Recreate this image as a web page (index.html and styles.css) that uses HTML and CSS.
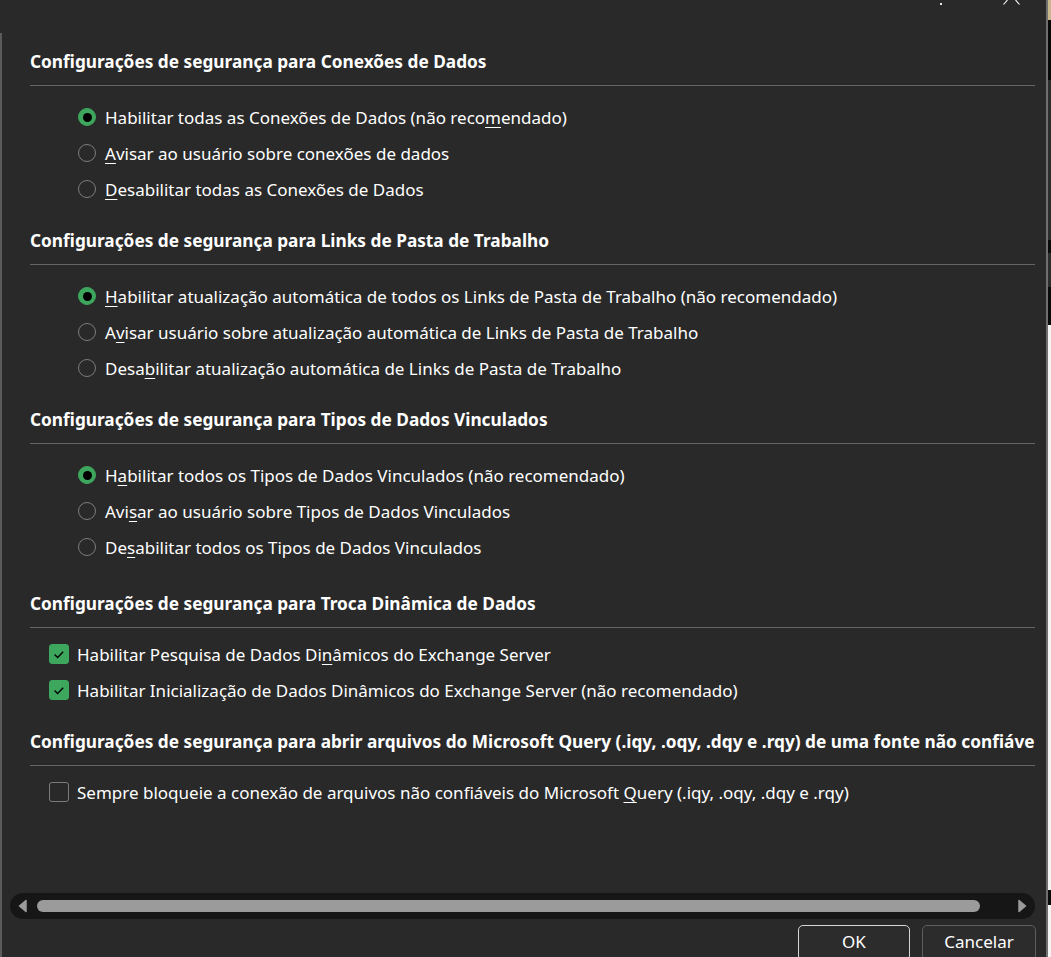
FILE: index.html
```html
<!DOCTYPE html>
<html lang="pt-BR">
<head>
<meta charset="utf-8">
<title>Central de Confiabilidade - Conteúdo Externo</title>
<link rel="stylesheet" href="styles.css">
</head>
<body>
<div class="screen">
  <div class="dialog">
    <div class="titlebar">
      <span class="help-dot"></span>
      <svg class="close-x" width="17" height="6" viewBox="0 0 17 6"><path d="M4.5 0 L0.5 4.5 M12.5 0 L16.5 4.5" stroke="#ffffff" stroke-width="1.1" fill="none"/></svg>
    </div>
    <div class="panel">
      <div class="content">
        <section class="group">
          <h2 class="group-title">Configurações de segurança para Conexões de Dados</h2>
          <div class="options radios">
            <label class="opt"><span class="radio checked"></span><span>Habilitar todas as Conexões de Dados (não reco<u>m</u>endado)</span></label>
            <label class="opt"><span class="radio"></span><span><u>A</u>visar ao usuário sobre conexões de dados</span></label>
            <label class="opt"><span class="radio"></span><span><u>D</u>esabilitar todas as Conexões de Dados</span></label>
          </div>
        </section>
        <section class="group">
          <h2 class="group-title">Configurações de segurança para Links de Pasta de Trabalho</h2>
          <div class="options radios">
            <label class="opt"><span class="radio checked"></span><span><u>H</u>abilitar atualização automática de todos os Links de Pasta de Trabalho (não recomendado)</span></label>
            <label class="opt"><span class="radio"></span><span>A<u>v</u>isar usuário sobre atualização automática de Links de Pasta de Trabalho</span></label>
            <label class="opt"><span class="radio"></span><span>Desa<u>b</u>ilitar atualização automática de Links de Pasta de Trabalho</span></label>
          </div>
        </section>
        <section class="group">
          <h2 class="group-title">Configurações de segurança para Tipos de Dados Vinculados</h2>
          <div class="options radios">
            <label class="opt"><span class="radio checked"></span><span>H<u>a</u>bilitar todos os Tipos de Dados Vinculados (não recomendado)</span></label>
            <label class="opt"><span class="radio"></span><span>Avi<u>s</u>ar ao usuário sobre Tipos de Dados Vinculados</span></label>
            <label class="opt"><span class="radio"></span><span>De<u>s</u>abilitar todos os Tipos de Dados Vinculados</span></label>
          </div>
        </section>
        <section class="group group-dde">
          <h2 class="group-title">Configurações de segurança para Troca Dinâmica de Dados</h2>
          <div class="options checks">
            <label class="opt"><span class="check checked"><svg width="20" height="20" viewBox="0 0 20 20"><path d="M5.6 10.4 L8.6 13.4 L14.2 7.8" stroke="#000" stroke-width="1.4" fill="none"/></svg></span><span>Habilitar Pesquisa de Dados Di<u>n</u>âmicos do Exchange Server</span></label>
            <label class="opt"><span class="check checked"><svg width="20" height="20" viewBox="0 0 20 20"><path d="M5.6 10.4 L8.6 13.4 L14.2 7.8" stroke="#000" stroke-width="1.4" fill="none"/></svg></span><span>Habilitar Inicialização de Dados Dinâmicos do Exchange Server (não recomendado)</span></label>
          </div>
        </section>
        <section class="group">
          <h2 class="group-title">Configurações de segurança para abrir arquivos do Microsoft Query (.iqy, .oqy, .dqy e .rqy) de uma fonte não confiável</h2>
          <div class="options checks checks-last">
            <label class="opt"><span class="check"></span><span>Sempre bloqueie a conexão de arquivos não confiáveis do Microsoft <u>Q</u>uery (.iqy, .oqy, .dqy e .rqy)</span></label>
          </div>
        </section>
      </div>
      <div class="hscroll">
        <svg class="arrow" width="10" height="14" viewBox="0 0 10 14"><path d="M8 1.5 L8 12.5 L1.5 7 Z" fill="#9b9b9b" stroke="#9b9b9b" stroke-width="1.5" stroke-linejoin="round"/></svg>
        <div class="thumb"></div>
        <svg class="arrow" width="10" height="14" viewBox="0 0 10 14"><path d="M2 1.5 L2 12.5 L8.5 7 Z" fill="#9b9b9b" stroke="#9b9b9b" stroke-width="1.5" stroke-linejoin="round"/></svg>
      </div>
      <div class="buttons">
        <button class="btn btn-default">OK</button>
        <button class="btn">Cancelar</button>
      </div>
    </div>
  </div>
  <div class="edge"></div>
</div>
</body>
</html>
```

FILE: styles.css
```css
html, body {
  margin: 0;
  padding: 0;
  height: 957px;
  overflow: hidden;
  background: #292929;
}

.screen {
  display: flex;
  width: 1051px;
  height: 957px;
  font-family: "Noto Sans", "Open Sans", sans-serif;
  color: #ffffff;
}

.dialog {
  width: 1046px;
  flex: none;
  display: flex;
  flex-direction: column;
  background: #292929;
}

.titlebar {
  height: 33px;
  flex: none;
  display: flex;
  align-items: flex-start;
  justify-content: flex-end;
  padding-right: 26px;
}

.help-dot {
  width: 2px;
  height: 2px;
  margin-top: 3px;
  margin-right: 61px;
  background: #e8e8e8;
}

.close-x {
  display: block;
}

.panel {
  flex: 1;
  display: flex;
  flex-direction: column;
  border-left: 2px solid #5a5a5a;
  min-height: 0;
}

.content {
  flex: 1;
  padding: 17px 11px 0 28px;
  overflow: hidden;
}

.group {
  overflow: hidden;
  margin-bottom: 22px;
}

.group-dde {
  margin-top: 27px;
}

.group-title {
  margin: 0;
  font-size: 17.25px;
  font-weight: 700;
  line-height: 24px;
  white-space: nowrap;
  padding-bottom: 11px;
  border-bottom: 1px solid #656565;
}

.options {
  display: flex;
  flex-direction: column;
}

.radios {
  padding: 13px 0 0 48px;
}

.checks {
  padding: 8px 0 0 19px;
}

.checks-last {
  padding-top: 8px;
}

.opt {
  display: flex;
  align-items: center;
  height: 36px;
  font-size: 17px;
  white-space: nowrap;
  color: #ffffff;
}

.opt u {
  text-underline-offset: 3px;
  text-decoration-thickness: 1px;
}

.radio {
  box-sizing: border-box;
  width: 18px;
  height: 18px;
  border-radius: 50%;
  border: 1.5px solid #7c7c7c;
  margin-right: 9px;
  flex: none;
  display: flex;
  align-items: center;
  justify-content: center;
}

.radio.checked {
  background: #3da75d;
  border-color: #3da75d;
}

.radio.checked::after {
  content: "";
  width: 9px;
  height: 9px;
  border-radius: 50%;
  background: #000000;
}

.check {
  box-sizing: border-box;
  width: 20px;
  height: 20px;
  border-radius: 3px;
  border: 1.5px solid #7c7c7c;
  margin-right: 8px;
  flex: none;
  position: relative;
}

.check svg {
  position: absolute;
  left: -1.5px;
  top: -1.5px;
}

.check.checked {
  background: #3da75d;
  border-color: #3da75d;
}

.hscroll {
  flex: none;
  height: 26px;
  margin: 0 11px 6px 8px;
  border-radius: 13px;
  background: #161616;
  display: flex;
  align-items: center;
  padding: 0 8px;
}

.arrow {
  flex: none;
  display: block;
}

.thumb {
  height: 12px;
  border-radius: 6px;
  background: #9b9b9b;
  margin: 0 37px 0 9px;
  flex: 1;
}

.buttons {
  flex: none;
  height: 32px;
  display: flex;
  justify-content: flex-end;
  align-items: flex-start;
  gap: 12px;
  padding-right: 10px;
}

.btn {
  height: 36px;
  flex: none;
  box-sizing: border-box;
  font-family: "Noto Sans", "Open Sans", sans-serif;
  font-size: 17px;
  color: #ffffff;
  background: #2c2c2c;
  border: 1px solid #5e5e5e;
  border-radius: 5px;
  padding: 0 0 4px;
  width: 114px;
}

.btn-default {
  width: 112px;
  border: 1.5px solid #d6d6d6;
}

.edge {
  width: 3px;
  flex: none;
  border-left: 2px solid #707070;
  background: linear-gradient(to bottom,
    #c8b88c 0, #c8b88c 20px,
    #080808 20px, #080808 80px,
    #2c2c2c 80px, #2c2c2c 240px,
    #0a0a0a 240px, #0a0a0a 253px,
    #2c2c2c 253px, #2c2c2c 287px,
    #0a0a0a 287px, #0a0a0a 325px,
    #f4f4f4 325px, #f4f4f4 890px,
    #0a0a0a 890px, #0a0a0a 905px,
    #f4f4f4 905px);
}
```
